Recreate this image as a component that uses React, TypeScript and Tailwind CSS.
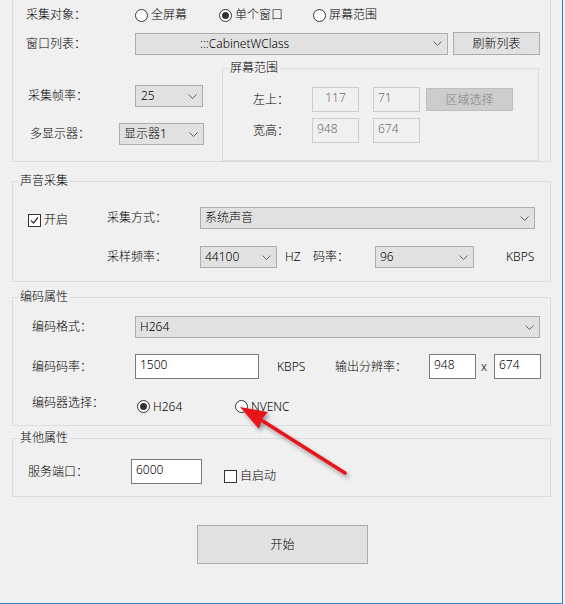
import type { ReactNode } from 'react';

function Chevron() {
  return (
    <svg width="9" height="5" viewBox="0 0 9 5" className="shrink-0">
      <polyline points="0.5,0.5 4.5,4.5 8.5,0.5" fill="none" stroke="#606060" strokeWidth="1" />
    </svg>
  );
}

function Combo({ w, text, pl = 'pl-[4px]' }: { w: string; text: string; pl?: string }) {
  return (
    <div className={`${w} h-[22px] flex items-center justify-between bg-[#e1e1e1] border border-[#adadad] pr-[5px] ${pl}`}>
      <span className="leading-[16px] whitespace-nowrap">{text}</span>
      <Chevron />
    </div>
  );
}

function Radio({ checked, label, w }: { checked?: boolean; label: string; w?: string }) {
  return (
    <div className={`flex items-center ${w ?? ''}`}>
      <div className="w-[13px] h-[13px] rounded-full border border-[#333] bg-white flex items-center justify-center">
        {checked && <div className="w-[7px] h-[7px] rounded-full bg-[#333]" />}
      </div>
      <span className="ml-[3px] leading-[16px]">{label}</span>
    </div>
  );
}

function Check({ checked, label }: { checked?: boolean; label: string }) {
  return (
    <div className="flex items-center">
      <div className="w-[13px] h-[13px] border border-[#333] bg-white flex items-center justify-center">
        {checked && (
          <svg width="11" height="11" viewBox="0 0 11 11">
            <polyline points="2,5.5 4.5,8 9,2.5" fill="none" stroke="#333" strokeWidth="1.2" />
          </svg>
        )}
      </div>
      <span className="ml-[3px] leading-[16px]">{label}</span>
    </div>
  );
}

function Entry({ text, disabled, center, w = 'w-[47px]' }: { text: string; disabled?: boolean; center?: boolean; w?: string }) {
  return (
    <div
      className={`${w} h-[25px] flex items-center pb-[3px] border ${
        disabled ? 'border-[#cccccc] bg-[#f0f0f0] text-[#6d6d6d]' : 'border-[#7a7a7a] bg-white text-black'
      } ${center ? 'justify-center' : 'pl-[4px]'}`}
    >
      <span className="leading-[16px]">{text}</span>
    </div>
  );
}

function Group({ title, h, mt, children }: { title: string; h: string; mt: string; children: ReactNode }) {
  return (
    <fieldset className={`w-[539px] ${h} ${mt} border border-[#dcdcdc]`}>
      <legend className="ml-[5px] px-[2px] leading-[16px]">{title}</legend>
      {children}
    </fieldset>
  );
}

export default function App() {
  return (
    <div className="relative w-[565px] h-[604px] overflow-hidden bg-[#f0f0f0] text-[12px] text-black font-['Noto_Sans','Noto_Sans_CJK_SC',sans-serif] font-light">
      <div className="w-[563px] h-[604px] border-r border-b border-[#2a83d1] pl-[12px]">
        {/* 视频采集 */}
        <div className="w-[539px] h-[162px] border-l border-r border-b border-[#dcdcdc]">
          <div className="h-[30px] flex items-center pl-[13px]">
            <span className="w-[109px] leading-[16px]">采集对象：</span>
            <Radio label="全屏幕" w="w-[84px]" />
            <Radio label="单个窗口" checked w="w-[94px]" />
            <Radio label="屏幕范围" />
          </div>
          <div className="mt-[2px] h-[23px] flex items-center pl-[13px]">
            <span className="w-[109px] leading-[16px]">窗口列表：</span>
            <Combo w="w-[313px] h-[21px]" text=":::CabinetWClass" pl="pl-[64px]" />
            <button className="ml-[5px] w-[87px] h-[23px] bg-[#e1e1e1] border border-[#adadad] leading-[16px]">刷新列表</button>
          </div>
          <div className="flex">
            <div className="w-[209px]">
              <div className="mt-[30px] h-[22px] flex items-center pl-[15px]">
                <span className="w-[107px] leading-[16px]">采集帧率：</span>
                <Combo w="w-[68px]" text="25" pl="pl-[5px]" />
              </div>
              <div className="mt-[16px] h-[22px] flex items-center pl-[17px]">
                <span className="w-[89px] leading-[16px]">多显示器：</span>
                <Combo w="w-[85px]" text="显示器1" />
              </div>
            </div>
            <fieldset className="mt-[5px] w-[317px] h-[101px] border border-[#dcdcdc]">
              <legend className="ml-[5px] px-[2px] leading-[16px]">屏幕范围</legend>
              <div className="mt-[11px] h-[25px] flex items-center pl-[30px]">
                <span className="w-[59px] leading-[16px]">左上：</span>
                <Entry text="117" disabled center />
                <div className="ml-[14px]">
                  <Entry text="71" disabled />
                </div>
                <button className="ml-[6px] w-[87px] h-[23px] bg-[#cccccc] border border-[#bfbfbf] text-[#838383] leading-[16px]">区域选择</button>
              </div>
              <div className="mt-[6px] h-[25px] flex items-center pl-[30px]">
                <span className="w-[59px] leading-[16px]">宽高：</span>
                <Entry text="948" disabled />
                <div className="ml-[14px]">
                  <Entry text="674" disabled />
                </div>
              </div>
            </fieldset>
          </div>
        </div>

        {/* 声音采集 */}
        <Group title="声音采集" h="h-[109px]" mt="mt-[11px]">
          <div className="mt-[18px] h-[22px] flex items-center pl-[15px]">
            <div className="w-[79px] translate-y-[2px]">
              <Check checked label="开启" />
            </div>
            <span className="w-[93px] leading-[16px]">采集方式：</span>
            <Combo w="w-[335px]" text="系统声音" />
          </div>
          <div className="mt-[17px] h-[22px] flex items-center pl-[94px]">
            <span className="w-[93px] leading-[16px]">采样频率：</span>
            <Combo w="w-[77px]" text="44100" />
            <span className="ml-[8px] w-[28px] leading-[16px]">HZ</span>
            <span className="w-[62px] leading-[16px]">码率：</span>
            <Combo w="w-[99px]" text="96" />
            <span className="ml-[32px] leading-[16px]">KBPS</span>
          </div>
        </Group>

        {/* 编码属性 */}
        <Group title="编码属性" h="h-[137px]" mt="mt-[7px]">
          <div className="mt-[11px] h-[22px] flex items-center pl-[19px]">
            <span className="w-[103px] leading-[16px]">编码格式：</span>
            <Combo w="w-[405px]" text="H264" />
          </div>
          <div className="mt-[16px] h-[25px] flex items-center pl-[19px]">
            <span className="w-[103px] leading-[16px]">编码码率：</span>
            <Entry text="1500" w="w-[124px]" />
            <span className="ml-[18px] w-[58px] leading-[16px]">KBPS</span>
            <span className="w-[94px] leading-[16px]">输出分辨率：</span>
            <Entry text="948" />
            <span className="w-[18px] pl-[5px] leading-[16px]">x</span>
            <Entry text="674" />
          </div>
          <div className="mt-[21px] h-[13px] flex items-center pl-[19px]">
            <span className="w-[105px] mb-[8px] leading-[16px]">编码器选择：</span>
            <Radio label="H264" checked w="w-[98px]" />
            <Radio label="NVENC" />
          </div>
        </Group>

        {/* 其他属性 */}
        <Group title="其他属性" h="h-[67px]" mt="mt-[4px]">
          <div className="mt-[13px] h-[25px] flex items-center pl-[15px]">
            <span className="w-[103px] leading-[16px]">服务端口：</span>
            <Entry text="6000" w="w-[71px]" />
            <div className="ml-[22px] mt-[9px]">
              <Check label="自启动" />
            </div>
          </div>
        </Group>

        <button className="mt-[28px] ml-[185px] w-[171px] h-[39px] bg-[#e1e1e1] border border-[#adadad] leading-[16px]">开始</button>
      </div>

      {/* 标注箭头 */}
      <svg
        className="absolute left-0 top-0 pointer-events-none drop-shadow-[2px_3px_2px_rgba(0,0,0,0.35)]"
        width="565"
        height="604"
        viewBox="0 0 565 604"
      >
        <line x1="258" y1="418" x2="345" y2="473" stroke="#e8141a" strokeWidth="3.5" strokeLinecap="round" />
        <polygon points="240,407 268,412 262,419 259,429" fill="#e8141a" />
      </svg>
    </div>
  );
}
